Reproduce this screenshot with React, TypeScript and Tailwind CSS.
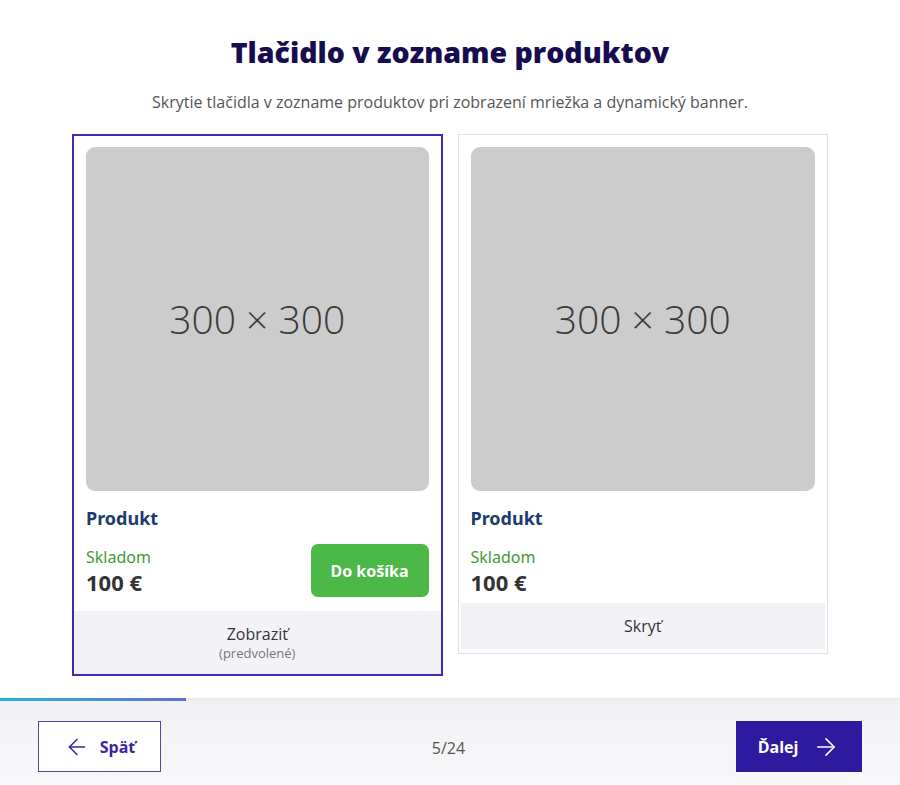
import { ArrowLeft, ArrowRight } from 'lucide-react';

interface OptionCardProps {
  label: string;
  note?: string;
  selected?: boolean;
  showButton?: boolean;
}

const OptionCard = ({ label, note, selected, showButton }: OptionCardProps) => {
  return (
    <div
      className={`flex flex-col bg-white ${
        selected ? 'border-2 border-[#3b2bb8] h-[542px]' : 'border border-[#e2e2e6] p-[2px] pt-0 self-start h-[520px]'
      }`}
    >
      {/* Product preview */}
      <div className={`${selected ? 'px-[12px] pt-[11px]' : 'px-[10px] pt-[12px]'}`}>
        <div className="h-[344px] rounded-[9px] bg-[#cccccc] flex items-center justify-center">
          <span className="font-['Open_Sans',sans-serif] text-[39px] font-light text-[#3a3a3a]">300 × 300</span>
        </div>
        <div className="mt-[15px] font-['Noto_Sans',sans-serif] text-[18px] font-bold text-[#1d3b6e] leading-[24px]">
          Produkt
        </div>
        <div className="flex items-end justify-between mt-[14px] h-[53px]">
          <div className="flex flex-col">
            <span className="font-['Noto_Sans',sans-serif] text-[16px] text-[#3f9a34] leading-[20px]">Skladom</span>
            <span className="font-['Noto_Sans',sans-serif] text-[22px] font-bold text-[#333] leading-[30px]">100 €</span>
          </div>
          {showButton && (
            <div className="w-[118px] h-[53px] rounded-[7px] bg-[#4cb848] flex items-center justify-center font-['Noto_Sans',sans-serif] text-[16px] font-bold text-white">
              Do košíka
            </div>
          )}
        </div>
      </div>

      {/* Option label */}
      <div
        className={`mt-auto bg-[#f3f3f7] flex flex-col items-center justify-center font-['Open_Sans',sans-serif] ${
          selected ? 'h-[63px]' : 'h-[46px] mb-[2px]'
        }`}
      >
        <span className="text-[16px] text-[#333] leading-[20px]">{label}</span>
        {note && <span className="mt-[1px] text-[13px] text-[#777] leading-[17px]">{note}</span>}
      </div>
    </div>
  );
};

export default function App() {
  return (
    <div className="w-[900px] h-[785px] bg-white flex flex-col overflow-hidden">
      <div className="flex-1 flex flex-col items-center">
        <h1 className="mt-[33px] font-['Open_Sans',sans-serif] text-[28.5px] font-extrabold text-[#160c4f] leading-[38px]">
          Tlačidlo v zozname produktov
        </h1>
        <p className="mt-[20px] font-['Open_Sans',sans-serif] text-[16px] text-[#555] leading-[22px]">
          Skrytie tlačidla v zozname produktov pri zobrazení mriežka a dynamický banner.
        </p>

        <div className="mt-[21px] w-full px-[72px] grid grid-cols-2 gap-[15px] items-start">
          <OptionCard label="Zobraziť" note="(predvolené)" selected showButton />
          <OptionCard label="Skryť" />
        </div>
      </div>

      {/* Progress */}
      <div className="h-[3px] bg-[#ececf0] flex">
        <div className="w-[186px] h-full bg-gradient-to-r from-[#1cb3d6] to-[#5b6fd6]" />
      </div>

      {/* Footer */}
      <div className="h-[84px] bg-gradient-to-b from-[#f2f2f5] to-[#f8f8fa] px-[38px] pt-[20px] flex items-start justify-between">
        <div className="w-[123px] h-[51px] bg-white border border-[#5548a0] flex items-center justify-center gap-[10px] text-[#3a24a8] font-['Open_Sans',sans-serif] text-[16px] font-bold">
          <ArrowLeft className="w-[26px] h-[26px]" strokeWidth={1.4} />
          Späť
        </div>
        <span className="mt-[15px] font-['Open_Sans',sans-serif] text-[16px] text-[#555]">5/24</span>
        <div className="w-[126px] h-[51px] bg-[#2e1a9f] flex items-center justify-center gap-[14px] text-white font-['Open_Sans',sans-serif] text-[16px] font-bold">
          Ďalej
          <ArrowRight className="w-[28px] h-[28px]" strokeWidth={1.4} />
        </div>
      </div>
    </div>
  );
}
